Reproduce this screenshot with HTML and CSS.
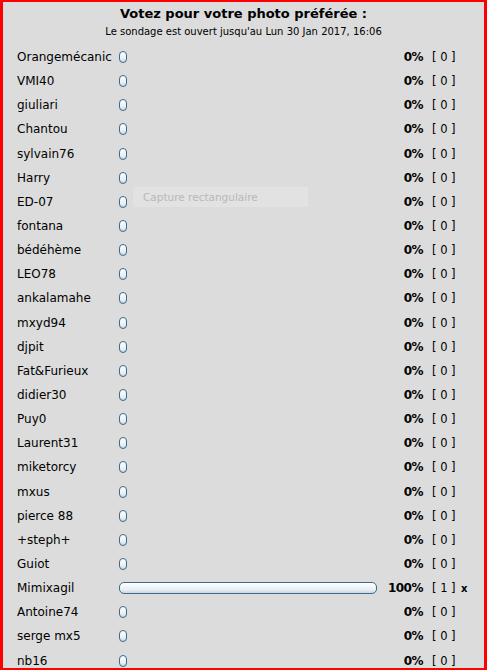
FILE: index.html
```html
<!DOCTYPE html>
<html>
<head>
<meta charset="utf-8">
<link rel="stylesheet" href="styles.css">
</head>
<body>
<div class="frame">
  <h1 class="title">Votez pour votre photo préférée :</h1>
  <p class="sub">Le sondage est ouvert jusqu'au Lun 30 Jan 2017, 16:06</p>
  <div class="poll">
    <div class="row"><span class="name">Orangemécanic</span><span class="bar"><i class="pill"></i></span><b class="pct">0%</b><span class="cnt">[ 0 ]</span><span class="mark"></span></div>
    <div class="row"><span class="name">VMI40</span><span class="bar"><i class="pill"></i></span><b class="pct">0%</b><span class="cnt">[ 0 ]</span><span class="mark"></span></div>
    <div class="row"><span class="name">giuliari</span><span class="bar"><i class="pill"></i></span><b class="pct">0%</b><span class="cnt">[ 0 ]</span><span class="mark"></span></div>
    <div class="row"><span class="name">Chantou</span><span class="bar"><i class="pill"></i></span><b class="pct">0%</b><span class="cnt">[ 0 ]</span><span class="mark"></span></div>
    <div class="row"><span class="name">sylvain76</span><span class="bar"><i class="pill"></i></span><b class="pct">0%</b><span class="cnt">[ 0 ]</span><span class="mark"></span></div>
    <div class="row"><span class="name">Harry</span><span class="bar"><i class="pill"></i></span><b class="pct">0%</b><span class="cnt">[ 0 ]</span><span class="mark"></span></div>
    <div class="row"><span class="name">ED-07</span><span class="bar"><i class="pill"></i></span><b class="pct">0%</b><span class="cnt">[ 0 ]</span><span class="mark"></span></div>
    <div class="row"><span class="name">fontana</span><span class="bar"><i class="pill"></i></span><b class="pct">0%</b><span class="cnt">[ 0 ]</span><span class="mark"></span></div>
    <div class="row"><span class="name">bédéhème</span><span class="bar"><i class="pill"></i></span><b class="pct">0%</b><span class="cnt">[ 0 ]</span><span class="mark"></span></div>
    <div class="row"><span class="name">LEO78</span><span class="bar"><i class="pill"></i></span><b class="pct">0%</b><span class="cnt">[ 0 ]</span><span class="mark"></span></div>
    <div class="row"><span class="name">ankalamahe</span><span class="bar"><i class="pill"></i></span><b class="pct">0%</b><span class="cnt">[ 0 ]</span><span class="mark"></span></div>
    <div class="row"><span class="name">mxyd94</span><span class="bar"><i class="pill"></i></span><b class="pct">0%</b><span class="cnt">[ 0 ]</span><span class="mark"></span></div>
    <div class="row"><span class="name">djpit</span><span class="bar"><i class="pill"></i></span><b class="pct">0%</b><span class="cnt">[ 0 ]</span><span class="mark"></span></div>
    <div class="row"><span class="name">Fat&amp;Furieux</span><span class="bar"><i class="pill"></i></span><b class="pct">0%</b><span class="cnt">[ 0 ]</span><span class="mark"></span></div>
    <div class="row"><span class="name">didier30</span><span class="bar"><i class="pill"></i></span><b class="pct">0%</b><span class="cnt">[ 0 ]</span><span class="mark"></span></div>
    <div class="row"><span class="name">Puy0</span><span class="bar"><i class="pill"></i></span><b class="pct">0%</b><span class="cnt">[ 0 ]</span><span class="mark"></span></div>
    <div class="row"><span class="name">Laurent31</span><span class="bar"><i class="pill"></i></span><b class="pct">0%</b><span class="cnt">[ 0 ]</span><span class="mark"></span></div>
    <div class="row"><span class="name">miketorcy</span><span class="bar"><i class="pill"></i></span><b class="pct">0%</b><span class="cnt">[ 0 ]</span><span class="mark"></span></div>
    <div class="row"><span class="name">mxus</span><span class="bar"><i class="pill"></i></span><b class="pct">0%</b><span class="cnt">[ 0 ]</span><span class="mark"></span></div>
    <div class="row"><span class="name">pierce 88</span><span class="bar"><i class="pill"></i></span><b class="pct">0%</b><span class="cnt">[ 0 ]</span><span class="mark"></span></div>
    <div class="row"><span class="name">+steph+</span><span class="bar"><i class="pill"></i></span><b class="pct">0%</b><span class="cnt">[ 0 ]</span><span class="mark"></span></div>
    <div class="row"><span class="name">Guiot</span><span class="bar"><i class="pill"></i></span><b class="pct">0%</b><span class="cnt">[ 0 ]</span><span class="mark"></span></div>
    <div class="row"><span class="name">Mimixagil</span><span class="bar"><i class="pill full"></i></span><b class="pct">100%</b><span class="cnt">[ 1 ]</span><span class="mark">x</span></div>
    <div class="row"><span class="name">Antoine74</span><span class="bar"><i class="pill"></i></span><b class="pct">0%</b><span class="cnt">[ 0 ]</span><span class="mark"></span></div>
    <div class="row"><span class="name">serge mx5</span><span class="bar"><i class="pill"></i></span><b class="pct">0%</b><span class="cnt">[ 0 ]</span><span class="mark"></span></div>
    <div class="row"><span class="name">nb16</span><span class="bar"><i class="pill"></i></span><b class="pct">0%</b><span class="cnt">[ 0 ]</span><span class="mark"></span></div>
  </div>
  <div class="tip">Capture rectangulaire</div>
</div>
</body>
</html>
```

FILE: styles.css
```css
html, body {
  margin: 0;
  padding: 0;
  background: #dcdcdc;
}
.frame {
  position: relative;
  box-sizing: border-box;
  width: 487px;
  height: 670px;
  overflow: hidden;
  border: 2px solid #ff0000;
  border-left-width: 3px;
  border-right-width: 3px;
  background: #dcdcdc;
  font-family: "DejaVu Sans", Verdana, sans-serif;
  color: #000;
}
.title {
  margin: 4px 0 0;
  text-align: center;
  font-size: 13px;
  font-weight: bold;
  line-height: 16px;
}
.sub {
  margin: 3px 0 0;
  text-align: center;
  font-size: 10px;
  line-height: 13px;
}
.poll {
  margin-top: 7px;
  display: flex;
  flex-direction: column;
}
.row {
  display: grid;
  grid-template-columns: 102px 266px 38px 32px 20px;
  align-items: center;
  height: 24.15px;
  padding-left: 14px;
  font-size: 12px;
}
.name {
  white-space: nowrap;
}
.bar {
  display: flex;
  align-items: center;
}
.pill {
  display: block;
  box-sizing: border-box;
  width: 8px;
  height: 12px;
  border: 1px solid #3f6a86;
  border-radius: 5px;
  background: linear-gradient(#ffffff, #e6eef4 70%, #c9d6e0);
}
.pill.full {
  width: 258px;
}
.pct {
  text-align: right;
  font-size: 12px;
  letter-spacing: -0.5px;
}
.cnt {
  padding-left: 9px;
  white-space: nowrap;
  font-size: 11.5px;
}
.mark {
  font-size: 10px;
  font-weight: bold;
  padding-left: 6px;
}
.tip {
  position: absolute;
  left: 130px;
  top: 185px;
  width: 175px;
  height: 20px;
  box-sizing: border-box;
  padding-left: 10px;
  background: #e2e2e2;
  color: #b8b8b8;
  font-size: 10.5px;
  line-height: 20px;
}
```
